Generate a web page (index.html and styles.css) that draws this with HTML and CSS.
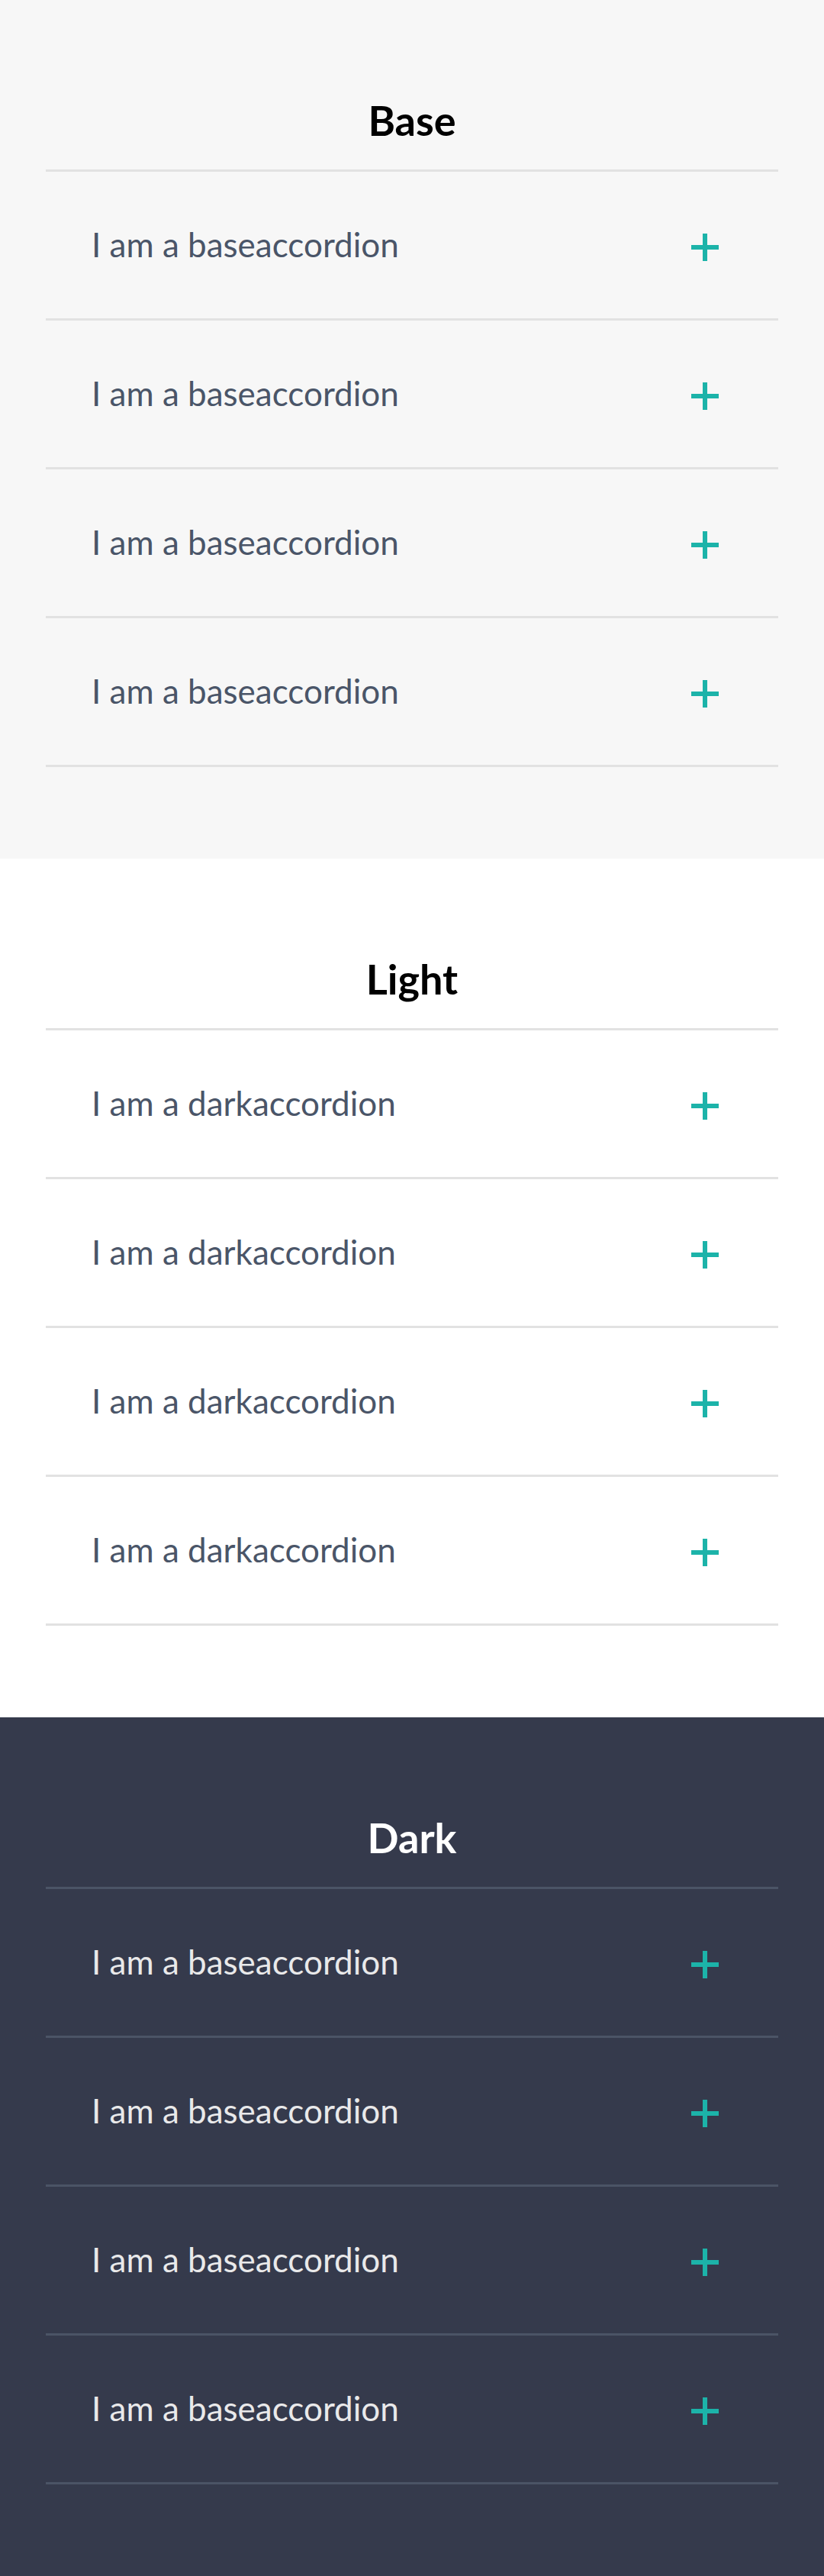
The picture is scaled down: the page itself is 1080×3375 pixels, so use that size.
FILE: index.html
```html
<!DOCTYPE html>
<html lang="en">
<head>
<meta charset="utf-8">
<title>Accordions</title>
<link rel="stylesheet" href="styles.css">
</head>
<body>
  <section class="panel panel-base">
    <h2 class="panel-title">Base</h2>
    <ul class="accordion">
      <li class="acc-item"><span class="acc-label">I am a baseaccordion</span><svg class="acc-icon" viewBox="0 0 36 36" width="36" height="36"><rect x="0" y="15" width="36" height="6"/><rect x="15" y="0" width="6" height="36"/></svg></li>
      <li class="acc-item"><span class="acc-label">I am a baseaccordion</span><svg class="acc-icon" viewBox="0 0 36 36" width="36" height="36"><rect x="0" y="15" width="36" height="6"/><rect x="15" y="0" width="6" height="36"/></svg></li>
      <li class="acc-item"><span class="acc-label">I am a baseaccordion</span><svg class="acc-icon" viewBox="0 0 36 36" width="36" height="36"><rect x="0" y="15" width="36" height="6"/><rect x="15" y="0" width="6" height="36"/></svg></li>
      <li class="acc-item"><span class="acc-label">I am a baseaccordion</span><svg class="acc-icon" viewBox="0 0 36 36" width="36" height="36"><rect x="0" y="15" width="36" height="6"/><rect x="15" y="0" width="6" height="36"/></svg></li>
    </ul>
  </section>
  <section class="panel panel-light">
    <h2 class="panel-title">Light</h2>
    <ul class="accordion">
      <li class="acc-item"><span class="acc-label">I am a darkaccordion</span><svg class="acc-icon" viewBox="0 0 36 36" width="36" height="36"><rect x="0" y="15" width="36" height="6"/><rect x="15" y="0" width="6" height="36"/></svg></li>
      <li class="acc-item"><span class="acc-label">I am a darkaccordion</span><svg class="acc-icon" viewBox="0 0 36 36" width="36" height="36"><rect x="0" y="15" width="36" height="6"/><rect x="15" y="0" width="6" height="36"/></svg></li>
      <li class="acc-item"><span class="acc-label">I am a darkaccordion</span><svg class="acc-icon" viewBox="0 0 36 36" width="36" height="36"><rect x="0" y="15" width="36" height="6"/><rect x="15" y="0" width="6" height="36"/></svg></li>
      <li class="acc-item"><span class="acc-label">I am a darkaccordion</span><svg class="acc-icon" viewBox="0 0 36 36" width="36" height="36"><rect x="0" y="15" width="36" height="6"/><rect x="15" y="0" width="6" height="36"/></svg></li>
    </ul>
  </section>
  <section class="panel panel-dark">
    <h2 class="panel-title">Dark</h2>
    <ul class="accordion">
      <li class="acc-item"><span class="acc-label">I am a baseaccordion</span><svg class="acc-icon" viewBox="0 0 36 36" width="36" height="36"><rect x="0" y="15" width="36" height="6"/><rect x="15" y="0" width="6" height="36"/></svg></li>
      <li class="acc-item"><span class="acc-label">I am a baseaccordion</span><svg class="acc-icon" viewBox="0 0 36 36" width="36" height="36"><rect x="0" y="15" width="36" height="6"/><rect x="15" y="0" width="6" height="36"/></svg></li>
      <li class="acc-item"><span class="acc-label">I am a baseaccordion</span><svg class="acc-icon" viewBox="0 0 36 36" width="36" height="36"><rect x="0" y="15" width="36" height="6"/><rect x="15" y="0" width="6" height="36"/></svg></li>
      <li class="acc-item"><span class="acc-label">I am a baseaccordion</span><svg class="acc-icon" viewBox="0 0 36 36" width="36" height="36"><rect x="0" y="15" width="36" height="6"/><rect x="15" y="0" width="6" height="36"/></svg></li>
    </ul>
  </section>
</body>
</html>
```

FILE: styles.css
```css
* {
  box-sizing: border-box;
}

html, body {
  margin: 0;
  padding: 0;
}

body {
  width: 1080px;
  font-family: Lato, "Open Sans", "Liberation Sans", sans-serif;
}

.panel {
  height: 1125px;
  padding: 126px 60px 0;
}

.panel-base {
  background: #f7f7f7;
}

.panel-light {
  background: #ffffff;
}

.panel-dark {
  background: #353a4c;
}

.panel-title {
  margin: 0 0 32px;
  height: 64px;
  font-size: 54px;
  line-height: 64px;
  font-weight: 700;
  text-align: center;
  color: #000000;
}

.panel-dark .panel-title {
  color: #ffffff;
}

.accordion {
  list-style: none;
  margin: 0;
  padding: 0;
  border-bottom: 3px solid #e2e2e2;
}

.acc-item {
  display: flex;
  align-items: center;
  justify-content: space-between;
  height: 195px;
  padding: 0 78px 2px 60px;
  border-top: 3px solid #e2e2e2;
}

.panel-dark .accordion,
.panel-dark .acc-item {
  border-color: #4b5466;
}

.acc-label {
  font-size: 44px;
  line-height: 54px;
  font-weight: 400;
  color: #4a5568;
}

.panel-dark .acc-label {
  color: #e9e9ea;
}

.acc-icon {
  display: block;
  flex: none;
  margin-top: 8px;
  fill: #1cb3a9;
}
```
